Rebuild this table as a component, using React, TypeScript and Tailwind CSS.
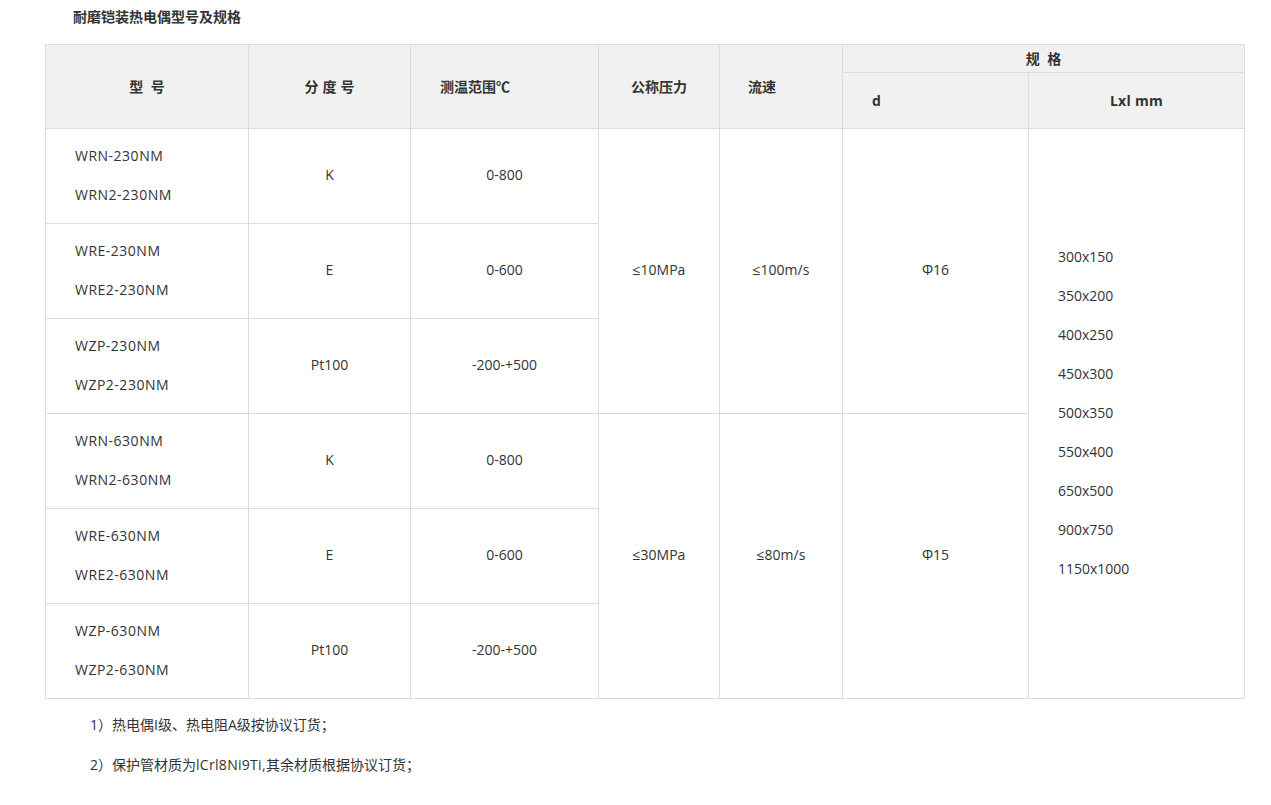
const font = { fontFamily: '"Open Sans", "Noto Sans CJK SC", sans-serif' };

type Row = {
  models: string[];
  grade: string;
  range: string;
};

const groupA: Row[] = [
  { models: ['WRN-230NM', 'WRN2-230NM'], grade: 'K', range: '0-800' },
  { models: ['WRE-230NM', 'WRE2-230NM'], grade: 'E', range: '0-600' },
  { models: ['WZP-230NM', 'WZP2-230NM'], grade: 'Pt100', range: '-200-+500' },
];

const groupB: Row[] = [
  { models: ['WRN-630NM', 'WRN2-630NM'], grade: 'K', range: '0-800' },
  { models: ['WRE-630NM', 'WRE2-630NM'], grade: 'E', range: '0-600' },
  { models: ['WZP-630NM', 'WZP2-630NM'], grade: 'Pt100', range: '-200-+500' },
];

const sizes = ['300x150', '350x200', '400x250', '450x300', '500x350', '550x400', '650x500', '900x750', '1150x1000'];

const cell = 'border border-[#dddddd] text-[14px] text-[#333333] align-middle pb-[3px]';
const head = 'border border-[#dddddd] bg-[#f1f1f1] text-[14px] font-bold text-[#333333] align-middle';

export default function App() {
  const renderGroup = (rows: Row[], pressure: string, speed: string, d: string, first: boolean) =>
    rows.map((r, i) => (
      <tr key={r.models[0]}>
        <td className={`${cell} h-[95px] pl-[29px]`}>
          <div className="flex flex-col leading-[39px] tracking-[0.5px]">
            {r.models.map((m) => (
              <span key={m}>{m}</span>
            ))}
          </div>
        </td>
        <td className={`${cell} text-center`}>{r.grade}</td>
        <td className={`${cell} text-center`}>{r.range}</td>
        {i === 0 && (
          <>
            <td rowSpan={3} className={`${cell} text-center`}>{pressure}</td>
            <td rowSpan={3} className={`${cell} text-center`}>{speed}</td>
            <td rowSpan={3} className={`${cell} text-center`}>{d}</td>
            {first && (
              <td rowSpan={6} className={`${cell} pl-[29px]`}>
                <div className="flex flex-col leading-[39px]">
                  {sizes.map((s) => (
                    <span key={s}>{s}</span>
                  ))}
                </div>
              </td>
            )}
          </>
        )}
      </tr>
    ));

  return (
    <div className="bg-white min-h-[805px] w-[1271px] pt-[7px]" style={font}>
      <div className="pl-[73px] text-[14px] font-bold text-[#333333] leading-[20px]">耐磨铠装热电偶型号及规格</div>
      <div className="pl-[45px] mt-[17px]">
        <table className="w-[1199px] table-fixed border-collapse">
          <colgroup>
            <col className="w-[203px]" />
            <col className="w-[162px]" />
            <col className="w-[188px]" />
            <col className="w-[121px]" />
            <col className="w-[123px]" />
            <col className="w-[186px]" />
            <col className="w-[216px]" />
          </colgroup>
          <thead>
            <tr>
              <th rowSpan={2} className={`${head} text-center`}>型&nbsp;&nbsp;号</th>
              <th rowSpan={2} className={`${head} text-center tracking-[4px] pl-[4px]`}>分度号</th>
              <th rowSpan={2} className={`${head} text-left pl-[29px]`}>测温范围℃</th>
              <th rowSpan={2} className={`${head} text-center`}>公称压力</th>
              <th rowSpan={2} className={`${head} text-left pl-[28px]`}>流速</th>
              <th colSpan={2} className={`${head} h-[28px] text-center`}>规&nbsp;&nbsp;格</th>
            </tr>
            <tr>
              <th className={`${head} h-[56px] text-left pl-[29px]`}>d</th>
              <th className={`${head} text-center tracking-[0.3px]`}>Lxl mm</th>
            </tr>
          </thead>
          <tbody>
            {renderGroup(groupA, '≤10MPa', '≤100m/s', 'Φ16', true)}
            {renderGroup(groupB, '≤30MPa', '≤80m/s', 'Φ15', false)}
          </tbody>
        </table>
        <div className="pl-[45px] pt-[16px] text-[14px] text-[#333333] leading-[20px] flex flex-col gap-[20px]">
          <p>1）热电偶I级、热电阻A级按协议订货；</p>
          <p>2）保护管材质为<span className="tracking-[0.3px]">lCrl8Ni9Ti,</span>其余材质根据协议订货；</p>
        </div>
      </div>
    </div>
  );
}
